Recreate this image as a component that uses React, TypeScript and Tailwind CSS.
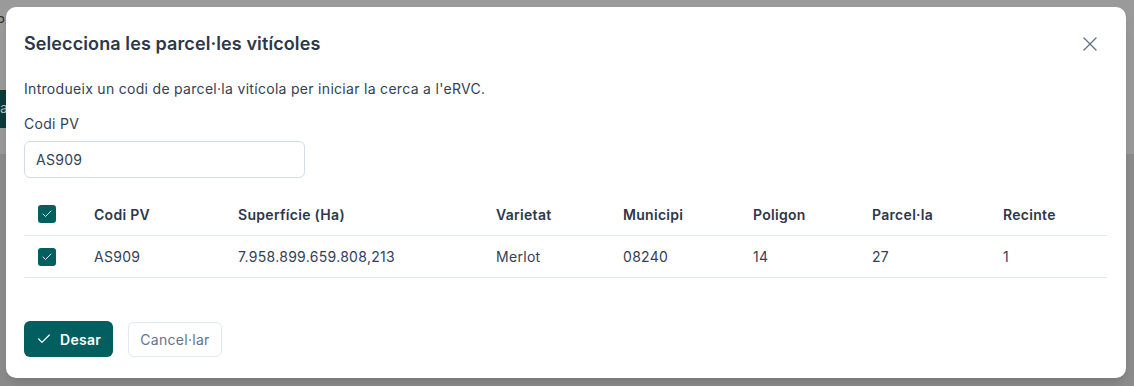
import { X, Check } from "lucide-react";

const columns = ["Codi PV", "Superfície (Ha)", "Varietat", "Municipi", "Poligon", "Parcel·la", "Recinte"];
const row = ["AS909", "7.958.899.659.808,213", "Merlot", "08240", "14", "27", "1"];

const grid = "grid grid-cols-[70px_144px_258px_127px_130px_119px_131px_1fr] items-center";

const Checkbox = () => (
  <span className="ml-[14px] flex h-[18px] w-[18px] items-center justify-center rounded-[3px] bg-[#035e60]">
    <Check className="h-3 w-3 text-white" strokeWidth={1.7} />
  </span>
);

const App = () => {
  return (
    <div className="relative h-[386px] w-[1134px] overflow-hidden bg-[#8c8c8c] font-['Inter',sans-serif] tracking-[0.3px]">
      {/* page behind the overlay */}
      <div className="h-[155px] border-b border-[#8a8a8a] bg-[#9a9a9a]">
        <div className="-ml-[4px] pt-3 text-sm text-[#333]">Po</div>
        <div className="mt-[58px] h-[38px] w-[10px] bg-[#0d3a3b] pt-2 text-sm text-[#bbb]">a</div>
      </div>

      <div className="absolute left-[6px] top-[7px] w-[1120px] rounded-[10px] bg-white px-[18px] pb-[21px] text-[#334155] shadow-lg">
        <div className="flex items-center justify-between pt-[23px]">
          <h2 className="text-[18px] font-semibold tracking-[0.1px] text-[#2d3748]">Selecciona les parcel·les vitícoles</h2>
          <X className="mr-[6px] h-6 w-6 text-[#64748b]" strokeWidth={1.4} />
        </div>

        <p className="mt-[21px] text-[14px] text-[#334155]">
          Introdueix un codi de parcel·la vitícola per iniciar la cerca a l'eRVC.
        </p>

        <label className="mt-[14px] block text-[14px] text-[#334155]">Codi PV</label>
        <div className="mt-[7px] flex h-[37px] w-[281px] items-center rounded-[6px] border border-[#d5dce6] px-[11px] text-[14px] text-[#334155]">
          AS909
        </div>

        <div className="mt-[15px] w-[1083px]">
          <div className={`${grid} h-[43px] border-b border-[#e2e6ee] text-[14px] font-semibold text-[#2d3748]`}>
            <Checkbox />
            {columns.map((c) => (
              <span key={c}>{c}</span>
            ))}
          </div>
          <div className={`${grid} h-[42px] border-b border-[#e2e6ee] text-[14px] text-[#334155]`}>
            <Checkbox />
            {row.map((c, i) => (
              <span key={i}>{c}</span>
            ))}
          </div>
        </div>

        <div className="mt-[43px] flex gap-[15px]">
          <button className="flex h-[36px] items-center gap-[8px] rounded-[6px] bg-[#035e60] pl-[12px] pr-[12px] text-[14px] font-semibold text-white">
            <Check className="h-4 w-4" strokeWidth={1.8} />
            Desar
          </button>
          <button className="mt-px h-[35px] rounded-[6px] border border-[#e2e8f0] px-[11px] text-[14px] text-[#64748b]">
            Cancel·lar
          </button>
        </div>
      </div>
    </div>
  );
};

export default App;
